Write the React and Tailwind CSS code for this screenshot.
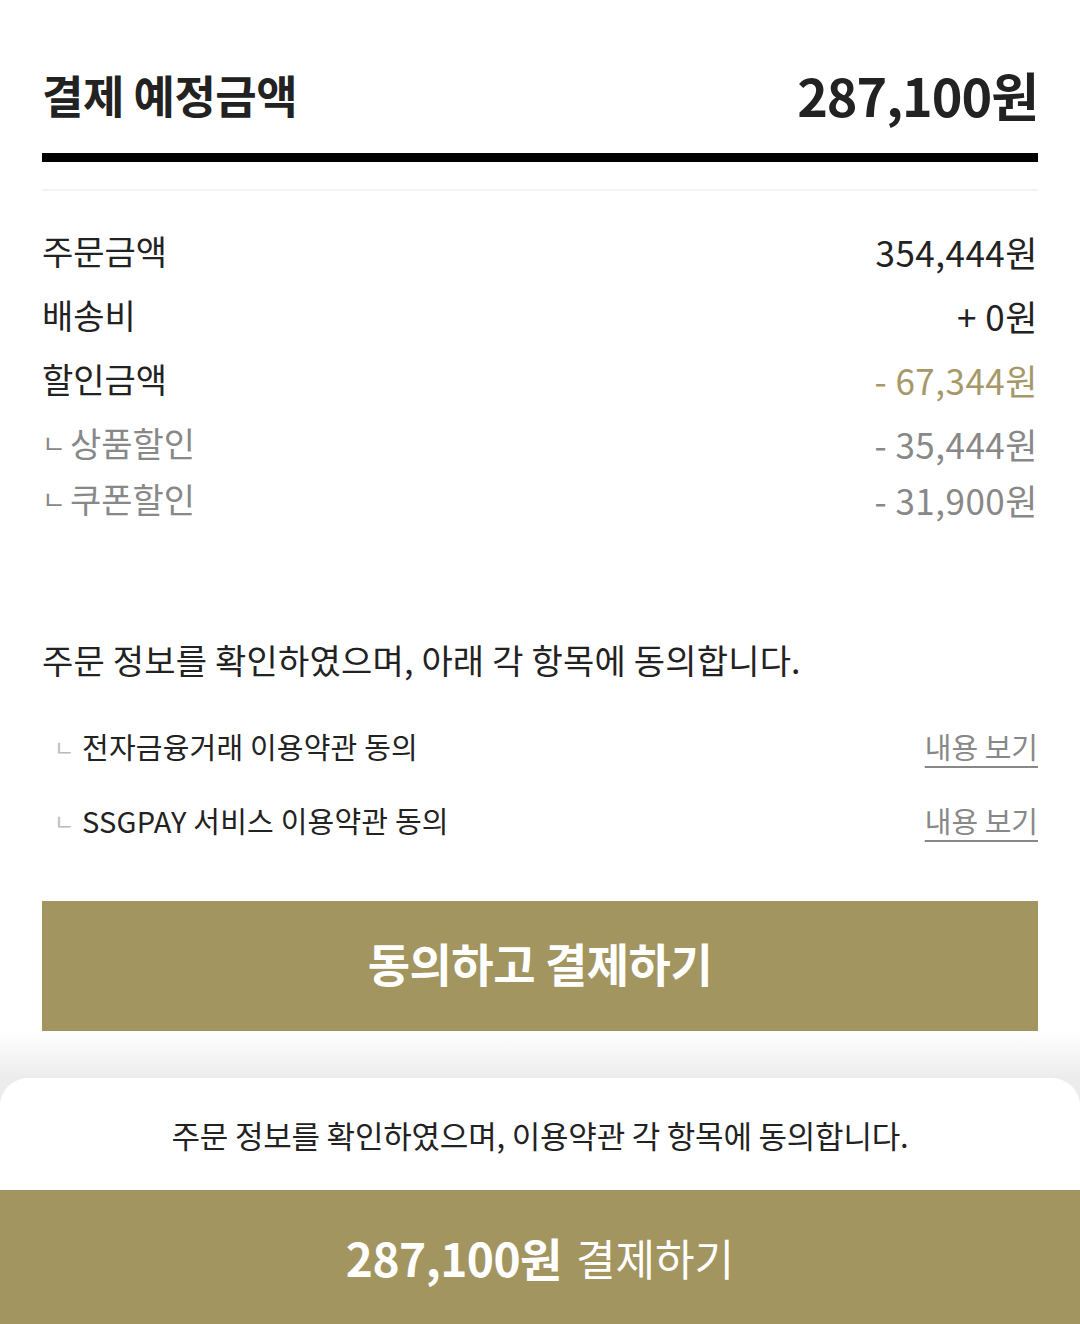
export default function App() {
  const font = { fontFamily: '"Noto Sans CJK KR", "Noto Sans", sans-serif' };

  const rows = [
    { label: "주문금액", value: "354,444원", tone: "main" },
    { label: "배송비", value: "+ 0원", tone: "main" },
    { label: "할인금액", value: "- 67,344원", tone: "gold" },
  ];
  const subRows = [
    { label: "상품할인", value: "- 35,444원" },
    { label: "쿠폰할인", value: "- 31,900원" },
  ];
  const terms = ["전자금융거래 이용약관 동의", "SSGPAY 서비스 이용약관 동의"];

  return (
    <div
      className="w-[1080px] h-[1324px] bg-white text-[#222] flex flex-col overflow-hidden"
      style={font}
    >
      <div className="px-[42px] flex-1 flex flex-col">
        {/* Header */}
        <div className="flex items-center justify-between pt-[58px] h-[153px] pb-[22px]">
          <h1 className="text-[45px] font-bold leading-none tracking-[-0.5px]">결제 예정금액</h1>
          <span className="text-[52px] font-bold leading-none tracking-[-1px]">287,100원</span>
        </div>
        <div className="h-[9px] bg-black" />
        <div className="h-[2px] bg-[#f3f3f3] mt-[27px]" />

        {/* Amounts */}
        <div className="mt-[28px] flex flex-col">
          {rows.map((r) => (
            <div key={r.label} className="flex items-center justify-between h-[64px]">
              <span className="text-[34px] leading-none">{r.label}</span>
              <span
                className={`text-[35px] leading-none tracking-[0.5px] ${
                  r.tone === "gold" ? "text-[#a69969]" : "text-[#222]"
                }`}
              >
                {r.value}
              </span>
            </div>
          ))}
          <div className="mt-[4px]" />
          {subRows.map((r) => (
            <div key={r.label} className="flex items-center justify-between h-[56px] text-[#888]">
              <span className="flex items-center">
                <span className="text-[26px] w-[28px] leading-none">ㄴ</span>
                <span className="text-[34px] leading-none">{r.label}</span>
              </span>
              <span className="text-[35px] leading-none tracking-[0.5px]">{r.value}</span>
            </div>
          ))}
        </div>

        {/* Agreement */}
        <p className="mt-[116px] text-[34px] leading-none tracking-[0.2px]">
          주문 정보를 확인하였으며, 아래 각 항목에 동의합니다.
        </p>
        <div className="mt-[32px] flex flex-col">
          {terms.map((t) => (
            <div key={t} className="flex items-center justify-between h-[74px]">
              <span className="flex items-center pl-[12px]">
                <span className="text-[22px] text-[#bbb] w-[28px] leading-none">ㄴ</span>
                <span className="text-[29px] leading-none tracking-[0.2px]">{t}</span>
              </span>
              <a className="text-[29px] text-[#888] underline underline-offset-[7px] decoration-2 leading-none">
                내용 보기
              </a>
            </div>
          ))}
        </div>

        <button className="mt-[44px] h-[130px] w-full bg-[#a3955f] text-white flex items-center justify-center pb-[8px]">
          <span className="text-[46px] font-bold leading-none tracking-[-0.5px]">동의하고 결제하기</span>
        </button>
      </div>

      {/* Bottom sheet */}
      <div className="h-[46px] bg-gradient-to-b from-white to-[#ececec]" />
      <div className="bg-[#ececec]">
        <div className="bg-white rounded-t-[28px] h-[112px] flex items-center justify-center">
          <p className="text-[31px] leading-none tracking-[-0.2px]">
            주문 정보를 확인하였으며, 이용약관 각 항목에 동의합니다.
          </p>
        </div>
      </div>
      <div className="h-[134px] bg-[#a3955f] flex items-center justify-center gap-[14px] text-white">
        <span className="text-[46px] font-bold leading-none tracking-[-0.5px]">287,100원</span>
        <span className="text-[43px] leading-none">결제하기</span>
      </div>
    </div>
  );
}
